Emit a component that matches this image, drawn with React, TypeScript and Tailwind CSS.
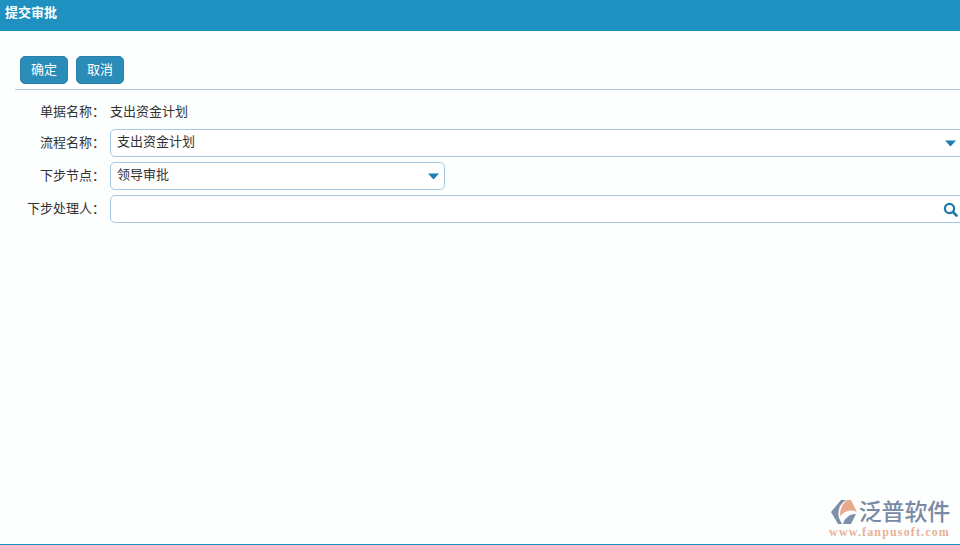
import React from "react";

const font = { fontFamily: '"Liberation Sans","Noto Sans CJK SC",sans-serif' };

function Caret() {
  return (
    <svg width="11" height="7" viewBox="0 0 11 7" className="mt-[2px] block">
      <path d="M0 0.5H11L5.5 6.5Z" fill="#1b7fb0" />
    </svg>
  );
}

function Search() {
  return (
    <svg width="15" height="15" viewBox="0 0 15 15" className="mt-[2px] block">
      <circle cx="6.5" cy="6.5" r="4.6" fill="none" stroke="#1a78a8" strokeWidth="2.2" />
      <path d="M10 10L13.6 13.6" stroke="#1a78a8" strokeWidth="2.6" strokeLinecap="round" />
    </svg>
  );
}

function Row({ label, children, cls }: { label: string; children: React.ReactNode; cls: string }) {
  return (
    <div className={"flex items-center " + cls}>
      <div className="w-[105px] shrink-0 text-right text-[13px] text-[#333]">{label}</div>
      <div className="ml-[5px] flex min-w-0 flex-1 items-center">{children}</div>
    </div>
  );
}

function Field({ value, icon, cls }: { value?: string; icon: React.ReactNode; cls: string }) {
  return (
    <div className={"flex h-[28px] shrink-0 items-center justify-between rounded-[5px] border border-[#a5c8e4] bg-white pb-[2px] pl-[6px] text-[13px] text-[#333] " + cls}>
      <span>{value}</span>
      {icon}
    </div>
  );
}

export default function App() {
  return (
    <div className="flex h-[545px] w-[960px] flex-col overflow-hidden bg-[#fdfefe]" style={font}>
      <div className="h-[31px] shrink-0 bg-[#1f91c0] pl-[5px] pt-[4px] text-[13px] leading-[17px] font-bold text-white">提交审批</div>
      <div className="flex gap-[8px] pl-[20px] pt-[25px]">
        <button className="h-[28px] w-[48px] rounded-[5px] border border-[#2a7ea8] bg-[#2a8cb8] text-[13px] text-white">确定</button>
        <button className="h-[28px] w-[48px] rounded-[5px] border border-[#2a7ea8] bg-[#2a8cb8] text-[13px] text-white">取消</button>
      </div>
      <div className="ml-[15px] mt-[5px] h-px shrink-0 bg-[#b3cbdf]" />
      <div className="flex flex-col pt-[12px]">
        <Row label="单据名称：" cls="h-[20px]">
          <span className="text-[13px] text-[#333]">支出资金计划</span>
        </Row>
        <Row label="流程名称：" cls="mt-[7px] h-[28px]">
          <Field value="支出资金计划" cls="w-[860px] pr-[13px]" icon={<Caret />} />
        </Row>
        <Row label="下步节点：" cls="mt-[5px] h-[28px]">
          <Field value="领导审批" cls="w-[335px] pr-[5px]" icon={<Caret />} />
        </Row>
        <Row label="下步处理人：" cls="mt-[5px] h-[28px]">
          <Field cls="w-[860px] pr-[11px]" icon={<Search />} />
        </Row>
      </div>
      <div className="flex flex-1 items-end justify-end pb-[7px] pr-[10px]">
        <div className="flex flex-col items-end">
          <div className="flex items-center gap-[2px]">
            <svg width="26" height="25" viewBox="0 0 26 25" className="block">
              <path d="M10 0H15C9 4 6 10 8 18L11 24H7L0 12Z" fill="#7f8fa8" />
              <path d="M16 0H20L26 12C20 9 14 11 9 16C9 9 11 4 16 0Z" fill="#eba98c" />
              <path d="M12 24C13 19 18 14 25 14L20 24Z" fill="#7f8fa8" />
            </svg>
            <div className="text-[23px] leading-[25px] font-medium tracking-[-0.2px] text-[#7a89a6]">泛普软件</div>
          </div>
          <div className="mt-[2px] text-[12px] leading-[10px] font-bold tracking-[1.15px] text-[#e8b299]" style={{ fontFamily: '"Liberation Serif",serif' }}>www.fanpusoft.com</div>
        </div>
      </div>
      <div className="h-px shrink-0 bg-[#1f91c0]" />
    </div>
  );
}
